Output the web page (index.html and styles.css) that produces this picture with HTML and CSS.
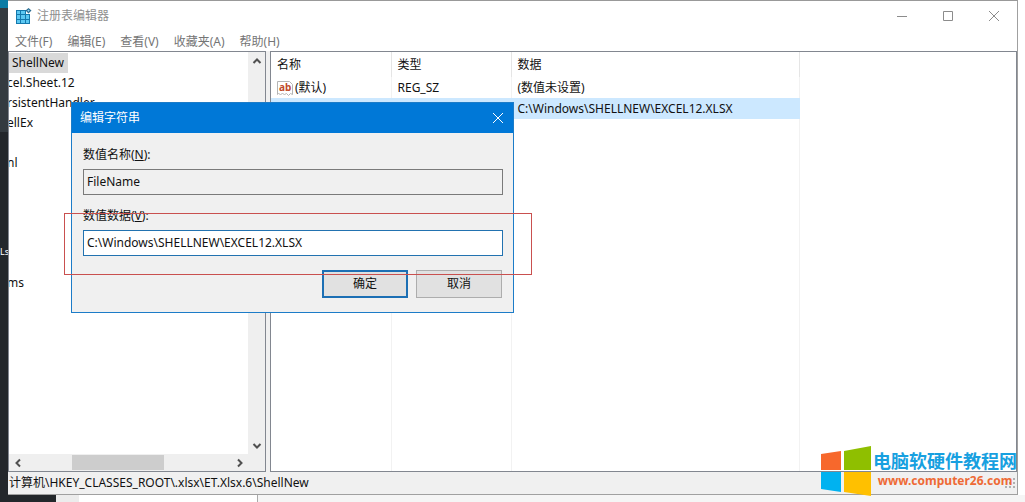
FILE: index.html
```
<!DOCTYPE html>
<html lang="zh-CN">
<head>
    <meta charset="UTF-8">
    <meta name="viewport" content="width=device-width, initial-scale=1.0">
    <title>注册表编辑器</title>
    <link rel="stylesheet" href="styles.css">
</head>
<body>
    <div class="backdrop">
        <span class="backdrop-text">Ls</span>
    </div>
    <div class="desktop">
        <main class="window">
            <header class="title-bar">
                <svg class="app-icon" width="16" height="16" viewBox="0 0 16 16">
                    <path fill="#1479ad" d="M0 2h10v4h4v10H0z"/>
                    <path fill="#5cc8f2" d="M1 3h3v3H1zM5 3h4v3H5zM1 7h3v4H1zM5 7h4v4H5zM10 7h3v4h-3zM1 12h3v3H1zM5 12h4v3H5zM10 12h3v3h-3z"/>
                    <path fill="#2b6d92" d="M12.500 0l3 2.500-3 3-3-3z"/>
                    <path fill="#8fd6f5" d="M12.500 1.500l1.200 1-1.200 1.200-1.200-1.200z"/>
                </svg>
                <h1>注册表编辑器</h1>
                <div class="window-buttons">
                    <button type="button" aria-label="最小化"><svg width="12" height="12" viewBox="0 0 12 12"><path d="M1 6.500h10"/></svg></button>
                    <button type="button" aria-label="最大化"><svg width="12" height="12" viewBox="0 0 12 12"><path d="M1.500 1.500h9v9h-9z"/></svg></button>
                    <button type="button" aria-label="关闭"><svg width="12" height="12" viewBox="0 0 12 12"><path d="M1 1l10 10M11 1L1 11"/></svg></button>
                </div>
            </header>
            <nav class="menu-bar">
                <a href="#">文件(F)</a>
                <a href="#">编辑(E)</a>
                <a href="#">查看(V)</a>
                <a href="#">收藏夹(A)</a>
                <a href="#">帮助(H)</a>
            </nav>
            <div class="panes">
                <section class="tree-pane">
                    <ul class="tree">
                        <li><span class="current">ShellNew</span></li>
                        <li>cel.Sheet.12</li>
                        <li>rsistentHandler</li>
                        <li>ellEx</li>
                        <li></li>
                        <li>nl</li>
                        <li></li>
                        <li></li>
                        <li></li>
                        <li></li>
                        <li></li>
                        <li>ms</li>
                    </ul>
                    <div class="scroll-y">
                        <button type="button" aria-label="向上"><svg width="10" height="10" viewBox="0 0 10 10"><path d="M1.500 7L5 3.500 8.500 7"/></svg></button>
                        <button type="button" aria-label="向下"><svg width="10" height="10" viewBox="0 0 10 10"><path d="M1.500 3L5 6.500 8.500 3"/></svg></button>
                    </div>
                    <div class="scroll-x">
                        <button type="button" aria-label="向左"><svg width="10" height="10" viewBox="0 0 10 10"><path d="M7 1.500L3.500 5 7 8.500"/></svg></button>
                        <div class="track"><div class="thumb"></div></div>
                        <button type="button" aria-label="向右"><svg width="10" height="10" viewBox="0 0 10 10"><path d="M3 1.500L6.500 5 3 8.500"/></svg></button>
                    </div>
                </section>
                <section class="value-pane">
                    <table class="values">
                        <thead>
                            <tr><th class="name">名称</th><th class="type">类型</th><th class="data">数据</th></tr>
                        </thead>
                        <tbody>
                            <tr>
                                <td>
                                    <div class="value-name">
                                        <svg width="16" height="16" viewBox="0 0 16 16">
                                            <path fill="#fff" stroke="#b5b5b5" d="M.500 1.500h12l3 3v10l-2-1-2 2-2-2-2 1-2-1-2 1-2-1-1 1z"/>
                                            <text x="2" y="11">ab</text>
                                        </svg>
                                        (默认)
                                    </div>
                                </td>
                                <td>REG_SZ</td>
                                <td>(数值未设置)</td>
                            </tr>
                            <tr class="selected">
                                <td></td>
                                <td></td>
                                <td>C:\Windows\SHELLNEW\EXCEL12.XLSX</td>
                            </tr>
                            <tr class="filler"><td></td><td></td><td></td></tr>
                        </tbody>
                    </table>
                </section>
            </div>
            <footer class="status-bar">
                <span>计算机\HKEY_CLASSES_ROOT\.xlsx\ET.Xlsx.6\ShellNew</span>
                <svg width="12" height="12" viewBox="0 0 12 12"><path fill="#b0b0b0" d="M9 1h2v2H9zM5 5h2v2H5zM9 5h2v2H9zM1 9h2v2H1zM5 9h2v2H5zM9 9h2v2H9z"/></svg>
            </footer>
        </main>
    </div>
    <div class="taskbar">
        <div class="tab-dark"></div>
        <div class="tab-grey"></div>
        <div class="tab-white"></div>
    </div>

    <form class="dialog" role="dialog" aria-label="编辑字符串">
        <div class="dialog-title">
            <h2>编辑字符串</h2>
            <button type="button" aria-label="关闭"><svg width="12" height="12" viewBox="0 0 12 12"><path d="M1 1l10 10M11 1L1 11"/></svg></button>
        </div>
        <div class="dialog-body">
            <label for="value-name">数值名称(<u>N</u>):</label>
            <input type="text" id="value-name" value="FileName" readonly>
            <label for="value-data">数值数据(<u>V</u>):</label>
            <input type="text" id="value-data" class="active" value="C:\Windows\SHELLNEW\EXCEL12.XLSX">
            <div class="dialog-buttons">
                <button type="submit" class="ok">确定</button>
                <button type="button">取消</button>
            </div>
        </div>
    </form>
    <div class="highlight"></div>

    <div class="watermark">
        <svg width="50" height="50" viewBox="0 0 50 50">
            <path fill="#f7682c" d="M0 8l20-3v19H0z"/>
            <path fill="#8fbf00" d="M23 5l27-5v24H23z"/>
            <path fill="#00b2f0" d="M0 26h20v20l-20-3z"/>
            <path fill="#ffc000" d="M23 26h27v24l-27-4z"/>
        </svg>
        <div class="watermark-text">
            <strong>电脑软硬件教程网</strong>
            <span>www.computer26.com</span>
        </div>
    </div>
</body>
</html>
```
FILE: styles.css
```
* {
    box-sizing: border-box;
}

body {
    margin: 0;
    height: 100vh;
    display: grid;
    grid-template-columns: 8px 1fr;
    grid-template-rows: 1fr 7px;
    overflow: hidden;
    background: #fff;
    color: #111;
    font-family: "Noto Sans", "Noto Sans CJK SC", sans-serif;
    font-size: 12px;
    line-height: 20px;
}

button {
    margin: 0;
    padding: 0;
    border: none;
    background: none;
    color: inherit;
    font: inherit;
}

svg {
    display: block;
    fill: none;
}

.backdrop {
    display: flex;
    align-items: center;
    padding-top: 8px;
    background: linear-gradient(#0b7ca5 8px, #343b40 8px, #343b40 132px, #23272b 132px);
}

.backdrop-text {
    color: #fff;
    font-size: 9px;
}

.desktop {
    display: flex;
    min-height: 0;
    padding-right: 7px;
}

/* main window */
.window {
    flex: 1;
    min-width: 0;
    display: flex;
    flex-direction: column;
    border-top: 1px solid #999;
    border-right: 1px solid #a0a0a0;
    border-bottom: 1px solid #a0a0a0;
    background: #fff;
}

.title-bar {
    display: flex;
    align-items: center;
    height: 30px;
    padding-left: 8px;
    gap: 5px;
}

.title-bar h1 {
    flex: 1;
    margin: 0;
    color: #909090;
    font-size: 12px;
    font-weight: normal;
}

.window-buttons {
    display: flex;
}

.window-buttons button {
    width: 46px;
    height: 30px;
    display: flex;
    align-items: center;
    justify-content: center;
}

.window-buttons path {
    stroke: #8c8c8c;
}

.menu-bar {
    display: flex;
    height: 20px;
    padding-left: 7px;
    gap: 15px;
    line-height: 22px;
}

.menu-bar a {
    color: #757575;
    text-decoration: none;
}

.panes {
    flex: 1;
    min-height: 0;
    display: flex;
    gap: 4px;
    background: #f0f0f0;
}

.tree-pane {
    width: 258px;
    display: grid;
    grid-template-columns: 1fr 17px;
    grid-template-rows: 1fr 17px;
    border: 1px solid #828790;
    background: #efefef;
}

.tree {
    margin: 0;
    padding: 1px 0 0;
    overflow: hidden;
    list-style: none;
    background: #fff;
}

.tree li {
    height: 20px;
    margin-left: -2px;
    white-space: nowrap;
}

.tree .current {
    display: inline-block;
    margin-left: 2px;
    padding: 0 4px 0 3px;
    background: #d9d9d9;
}

.scroll-y {
    display: flex;
    flex-direction: column;
    justify-content: space-between;
}

.scroll-x {
    display: flex;
}

.scroll-y button,
.scroll-x button {
    width: 17px;
    height: 17px;
    display: flex;
    align-items: center;
    justify-content: center;
}

.scroll-y path,
.scroll-x path {
    stroke: #505050;
    stroke-width: 2;
}

.track {
    flex: 1;
    padding-left: 46px;
}

.thumb {
    width: 92px;
    height: 15px;
    margin-top: 1px;
    background: #cdcdcd;
}

.value-pane {
    flex: 1;
    border: 1px solid #828790;
    background: #fff;
}

.values {
    height: 100%;
    border-collapse: collapse;
    table-layout: fixed;
}

.values th,
.values td {
    height: 21px;
    padding: 0 6px;
    border-right: 1px solid #f2f2f2;
    text-align: left;
    font-weight: normal;
    white-space: nowrap;
}

.values th {
    height: 25px;
    border-right-color: #e5e5e5;
}

.values .name,
.values .type {
    width: 120px;
}

.values .data {
    width: 288px;
}

.values .selected td {
    background: #cce8ff;
    border-right-color: #cce8ff;
}

.values .filler td {
    height: auto;
}

.value-name {
    display: flex;
    align-items: center;
    gap: 2px;
}

.value-name text {
    fill: #c04a2b;
    font-size: 10px;
    font-weight: bold;
}

.status-bar {
    display: flex;
    align-items: center;
    justify-content: space-between;
    height: 22px;
    padding: 0 1px;
    background: #f0f0f0;
}

/* strip under the window */
.taskbar {
    grid-column: 1 / -1;
    display: flex;
    background: #f5f5f5;
}

.tab-dark {
    width: 56px;
    background: #23272b;
}

.tab-grey {
    width: 23px;
    background: #ececec;
}

.tab-white {
    width: 179px;
    border-right: 1px solid #aaa;
    background: #fff;
}

/* edit string dialog */
.dialog {
    position: absolute;
    left: 71px;
    top: 102px;
    width: 443px;
    border: 1px solid #1c7cc8;
    background: #f0f0f0;
}

.dialog-title {
    display: flex;
    align-items: center;
    justify-content: space-between;
    height: 30px;
    padding: 0 9px 0 8px;
    background: #0078d7;
    color: #fff;
}

.dialog-title h2 {
    margin: 0;
    font-size: 12px;
    font-weight: normal;
}

.dialog-title path {
    stroke: #fff;
}

.dialog-body {
    display: flex;
    flex-direction: column;
    padding: 12px 10px 14px 11px;
}

.dialog-body label {
    margin-bottom: 4px;
}

.dialog-body input {
    height: 26px;
    margin: 0 0 11px;
    padding: 0 3px 2px;
    border: 1px solid #7a7a7a;
    background: #f0f0f0;
    color: inherit;
    font: inherit;
    outline: none;
}

.dialog-body .active {
    border-color: #2272b0;
    background: #fff;
}

.dialog-buttons {
    display: flex;
    justify-content: flex-end;
    gap: 8px;
    padding: 3px 1px 0 0;
}

.dialog-buttons button {
    width: 86px;
    height: 28px;
    border: 1px solid #adadad;
    background: #e1e1e1;
}

.dialog-buttons .ok {
    border: 2px solid #1c6fb4;
}

/* red frame round the value field */
.highlight {
    position: absolute;
    left: 64px;
    top: 213px;
    width: 468px;
    height: 62px;
    border: 1px solid #c9504f;
    pointer-events: none;
}

.watermark {
    position: absolute;
    right: 8px;
    bottom: 6px;
    display: flex;
    align-items: center;
    gap: 2px;
}

.watermark-text {
    display: flex;
    flex-direction: column;
    align-items: center;
}

.watermark-text strong {
    color: #17a0e0;
    font-size: 18px;
}

.watermark-text span {
    color: #ee6a35;
    font-size: 12px;
    font-weight: bold;
}
```
